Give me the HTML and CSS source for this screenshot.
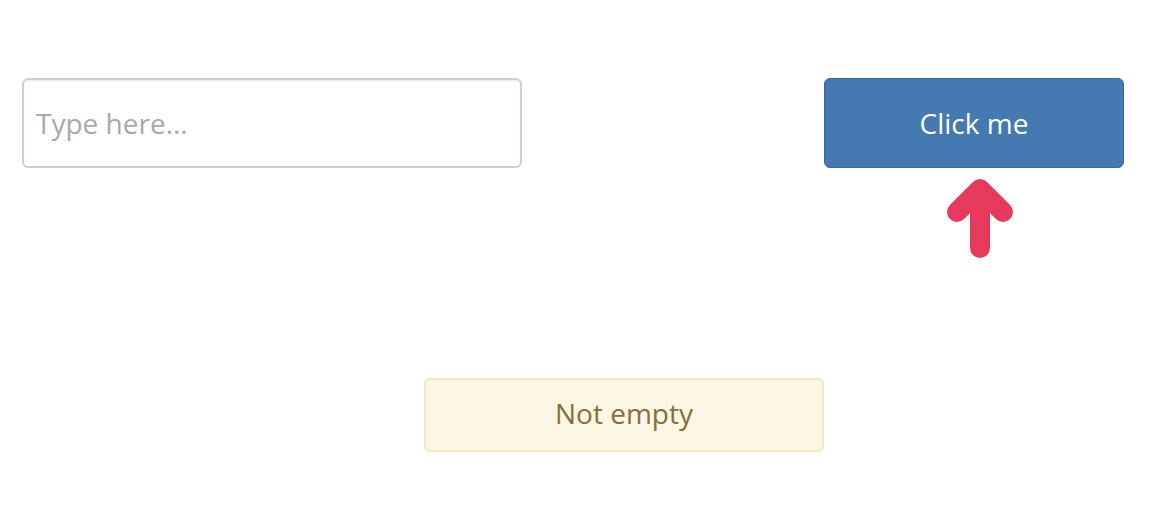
FILE: index.html
```html
<!DOCTYPE html>
<html>
<head>
<meta charset="utf-8">
<link rel="stylesheet" href="styles.css">
</head>
<body>
<div class="page">
  <div class="row">
    <input class="field" type="text" placeholder="Type here...">
    <div class="btn-col">
      <button class="btn">Click me</button>
      <svg class="arrow" width="80" height="90" viewBox="0 0 80 90">
        <path d="M40 74 L40 18 M17 38 L40 15 L63 38" fill="none" stroke="#e63a5c" stroke-width="20" stroke-linecap="round" stroke-linejoin="round"/>
      </svg>
    </div>
  </div>
  <div class="alert-row">
    <div class="alert">Not empty</div>
  </div>
</div>
</body>
</html>
```
FILE: styles.css
```css
html, body {
  margin: 0;
  padding: 0;
  background: #fff;
  font-family: "Open Sans", "Liberation Sans", sans-serif;
}
.page {
  width: 1102px;
  padding: 78px 0 0 22px;
}
.row {
  display: flex;
  justify-content: space-between;
  align-items: flex-start;
}
.field {
  box-sizing: border-box;
  width: 500px;
  height: 90px;
  border: 2px solid #cfcfcf;
  border-radius: 6px;
  box-shadow: inset 0 2px 2px rgba(0,0,0,0.06);
  padding: 0 12px;
  font-family: inherit;
  font-size: 28px;
  color: #555;
  outline: none;
}
.field::placeholder {
  color: #a9a9a9;
}
.btn-col {
  display: flex;
  flex-direction: column;
  align-items: center;
  width: 300px;
}
.btn {
  box-sizing: border-box;
  width: 300px;
  height: 90px;
  background: #4479b2;
  border: 1px solid #3a67a0;
  border-radius: 6px;
  color: #fff;
  font-family: inherit;
  font-size: 28px;
  font-weight: 500;
  padding: 0;
}
.arrow {
  display: block;
  margin-top: 6px;
  margin-left: 12px;
}
.alert-row {
  padding-left: 402px;
  margin-top: 114px;
}
.alert {
  box-sizing: border-box;
  width: 400px;
  height: 74px;
  padding-bottom: 4px;
  background: #fbf7e4;
  border: 2px solid #f7e8c4;
  border-radius: 6px;
  color: #8a6d3b;
  font-size: 28px;
  display: flex;
  align-items: center;
  justify-content: center;
}
```
